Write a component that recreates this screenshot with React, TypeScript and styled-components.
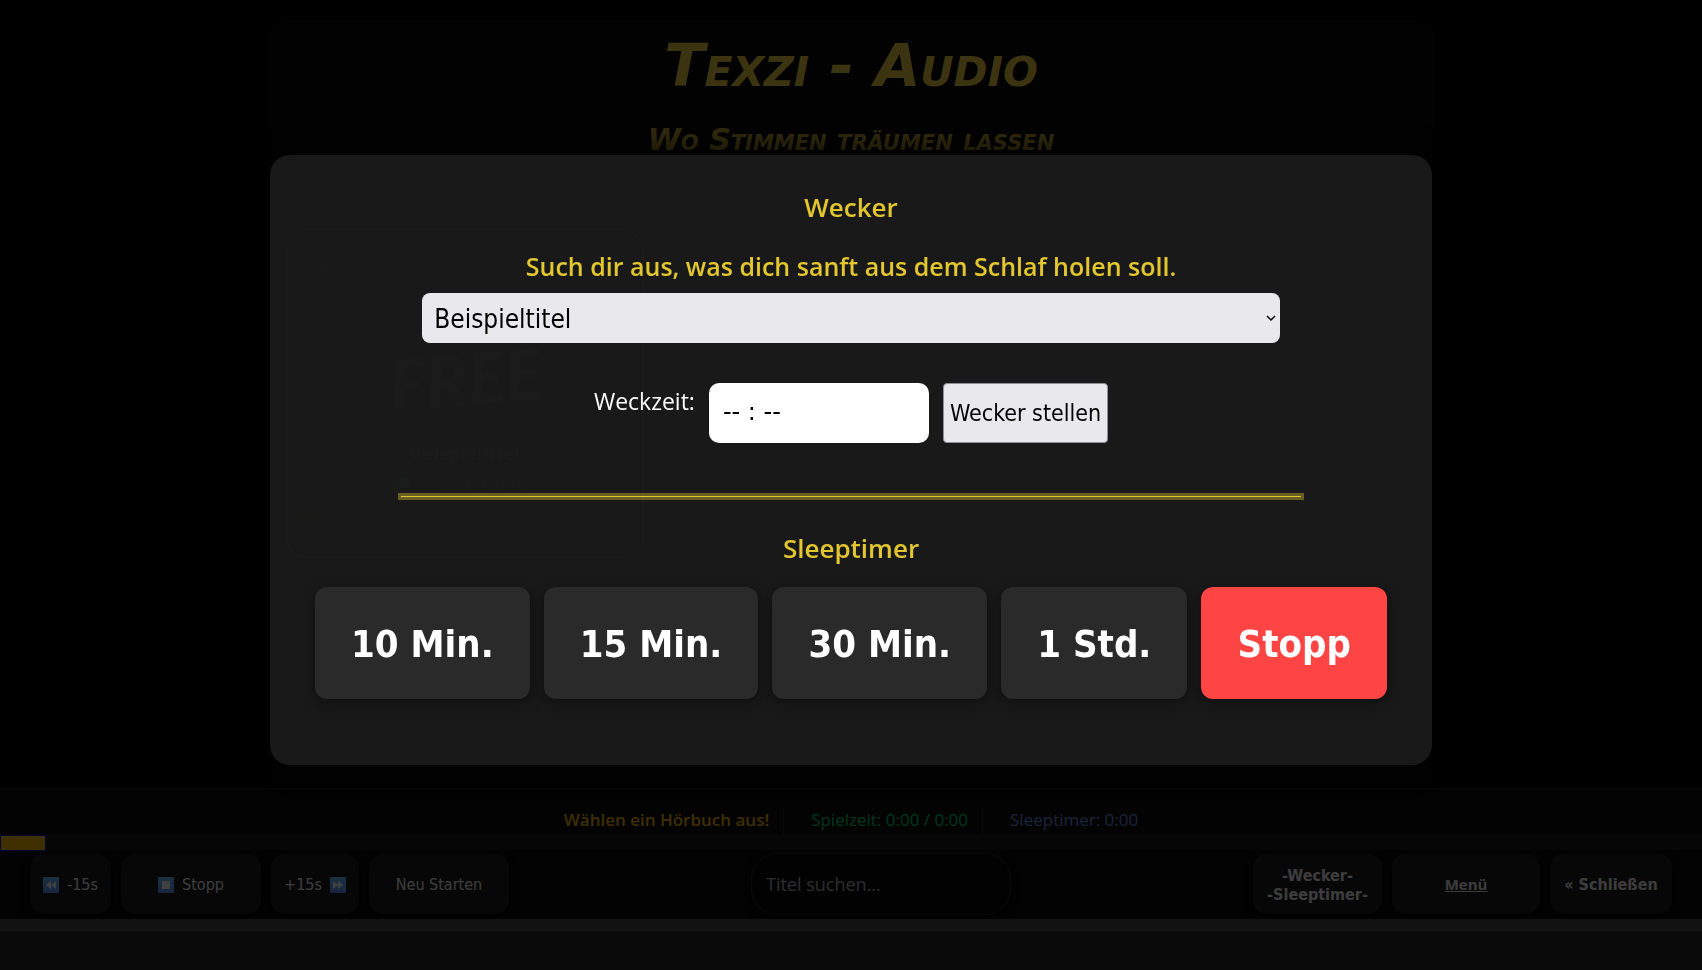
import React from 'react';
import styled, { createGlobalStyle } from 'styled-components';

const UI = "'DejaVu Sans Condensed', 'DejaVu Sans', sans-serif";
const TEXT = "'Open Sans', 'Noto Sans', sans-serif";
const GOLD = '#e3c72f';

const GlobalStyle = createGlobalStyle`
  * { box-sizing: border-box; }
  body { margin: 0; background: #000; color: #fff; font-family: ${TEXT}; }
  h1, h2, h3, p { margin: 0; }
  button, input, select { font-family: ${UI}; margin: 0; }
`;

/* ---------- page ---------- */
const Page = styled.div`
  display: flex;
  flex-direction: column;
  min-height: 100vh;
  overflow: hidden;
`;

const Main = styled.main`
  flex: 1;
  display: flex;
  justify-content: center;
  padding: 20px 20px 0;
`;

const Container = styled.div`
  width: 100%;
  max-width: 1168px;
  padding: 12px 19px 0;
  border-radius: 16px 16px 0 0;
  background: #080808;
`;

const SiteHeader = styled.header`
  font-family: 'DejaVu Sans', sans-serif;
  font-variant: small-caps;
  font-style: italic;
  text-align: center;
  color: #f0d040;
`;

const Title = styled.h1`
  font-size: 59px;
  font-weight: 700;
  line-height: 68px;
`;

const Subtitle = styled.p`
  margin-top: 24px;
  font-size: 30px;
  font-weight: 700;
  line-height: 32px;
  color: #d0b038;
`;

const BookCard = styled.article`
  display: flex;
  flex-direction: column;
  align-items: center;
  width: 358px;
  height: 330px;
  margin-top: 73px;
  padding: 12px 4px 0;
  border: 2px solid #e0c840;
  border-radius: 22px;
  background: #000;
`;

const Cover = styled.div`
  display: grid;
  grid-template-columns: 56px 1fr 56px;
  flex-shrink: 0;
  width: 100%;
  height: 198px;
`;

const Badge = styled.svg`
  justify-self: center;
`;

const CoverArt = styled.div`
  display: flex;
  align-items: flex-end;
  justify-content: center;
  background: linear-gradient(#30200c, #000 70%);
`;

const CoverWord = styled.span`
  font: italic 700 70px / 126px Lato, sans-serif;
  transform: rotate(-5deg);
`;

const BookTitle = styled.h3`
  font: 700 18px / 26px ${UI};
`;

const BookMeta = styled.p`
  display: flex;
  align-items: center;
  gap: 8px;
  margin-top: 6px;
  font: 400 14px / 24px ${UI};
  color: #b0b0b0;
`;

const BookProgress = styled.div`
  align-self: flex-start;
  width: 26px;
  height: 6px;
  margin: 14px 0 16px;
  background: #a08010;
`;

const BookHeard = styled.p`
  font: 400 14px / 20px 'DejaVu Sans Mono', monospace;
  color: #b0b0b0;
`;

/* ---------- player ---------- */
const Player = styled.footer`
  border-top: 1px solid #282828;
  background: #0c0c0c;
`;

const StatusLine = styled.div`
  display: flex;
  justify-content: center;
  height: 46px;
  padding-top: 18px;
  font-size: 17px;
  line-height: 26px;
`;

const Status = styled.span<{ $color: string; $strong?: boolean }>`
  color: ${(p) => p.$color};
  font-weight: ${(p) => (p.$strong ? 600 : 400)};

  & + & {
    margin-left: 14px;
    padding-left: 27px;
    border-left: 1px solid #202020;
  }
`;

const Track = styled.div`
  height: 15px;
  background: #1a1a1a;
`;

const TrackFill = styled.div`
  width: 46px;
  height: 16px;
  border: 1px solid #1414d8;
  background: #ffc000;
`;

const Controls = styled.div`
  display: flex;
  justify-content: space-between;
  align-items: center;
  height: 69px;
  padding: 0 30px 2px;
`;

const Group = styled.div`
  display: flex;
  gap: 10px;
`;

const controlBox = `
  display: flex;
  align-items: center;
  justify-content: center;
  gap: 8px;
  height: 60px;
  padding: 2px 0 0;
  border: 0;
  border-radius: 14px;
  background: #1c1c1c;
  box-shadow: 0 4px 10px #000;
  color: #f0f0f0;
  font-size: 16px;
  line-height: 19px;
`;

const Control = styled.button<{ $width: number; $strong?: boolean }>`
  ${controlBox}
  width: ${(p) => p.$width}px;
  font-weight: ${(p) => (p.$strong ? 700 : 400)};
`;

const MenuLink = styled.a`
  ${controlBox}
  width: 148px;
  font-family: ${TEXT};
  font-size: 15px;
  font-weight: 700;
`;

const Search = styled.input`
  width: 260px;
  height: 62px;
  padding: 0 14px;
  border: 1px solid #262626;
  border-radius: 26px;
  background: #0a0a0a;
  box-shadow: 0 4px 10px #000;
  color: #fff;
  font-family: ${TEXT};
  font-size: 18px;

  &::placeholder { color: #b0b0b0; opacity: 1; }
`;

const Strip = styled.div`
  height: 12px;
  background: #484848;
`;

const BottomArea = styled.div`
  height: 39px;
  background: #282828;
`;

/* ---------- dialog ---------- */
const Overlay = styled.div`
  position: fixed;
  inset: 0;
  display: flex;
  align-items: flex-start;
  justify-content: center;
  padding: 155px 20px 20px;
  overflow: auto;
  background: rgba(0, 0, 0, 0.75);
`;

const Dialog = styled.section`
  display: flex;
  flex-direction: column;
  align-items: center;
  width: 100%;
  max-width: 1162px;
  padding: 34px 45px 66px;
  border-radius: 20px;
  background: rgba(26, 26, 26, 0.96);
  box-shadow: 0 0 40px #000;
`;

const Heading = styled.h2`
  color: ${GOLD};
  font-size: 26px;
  font-weight: 600;
  line-height: 36px;
`;

const Prompt = styled.label`
  margin: 23px 0 9px;
  color: ${GOLD};
  font-size: 25px;
  font-weight: 600;
  line-height: 36px;
`;

const SelectWrap = styled.div`
  position: relative;
  width: 80%;
`;

const Select = styled.select`
  appearance: none;
  display: block;
  width: 100%;
  height: 50px;
  padding: 2px 12px 0;
  border: 0;
  border-radius: 8px;
  background: #e9e9ed;
  color: #000;
  font-size: 26px;
`;

const Chevron = styled.svg`
  position: absolute;
  top: 22px;
  right: 4px;
  pointer-events: none;
`;

const AlarmForm = styled.form`
  display: flex;
  align-items: flex-start;
  gap: 14px;
  margin: 40px 0 50px;
`;

const TimeLabel = styled.label`
  font-size: 23px;
  line-height: 36px;
`;

const TimeInput = styled.input`
  width: 220px;
  height: 60px;
  padding: 0 14px 2px;
  border: 0;
  border-radius: 10px;
  background: #fff;
  color: #000;
  font-family: 'DejaVu Sans', sans-serif;
  font-size: 24px;

  &::placeholder { color: #000; opacity: 1; }
`;

const SetButton = styled.button`
  height: 60px;
  padding: 0 6px;
  border: 1px solid #8f8f9d;
  border-radius: 4px;
  background: #e9e9ed;
  color: #000;
  font-size: 23px;
`;

const Divider = styled.hr`
  width: 906px;
  max-width: 100%;
  height: 7px;
  margin: 0 0 30px;
  border: 3px solid rgba(227, 199, 47, 0.4);
  background: ${GOLD};
  background-clip: content-box;
`;

const TimerRow = styled.div`
  display: flex;
  gap: 14px;
  width: 100%;
  margin-top: 21px;
`;

const TimerButton = styled.button<{ $stop?: boolean }>`
  flex: 1 1 auto;
  height: 112px;
  padding: 2px 36px 0;
  border: 0;
  border-radius: 12px;
  background: ${(p) => (p.$stop ? '#ff4444' : '#2a2a2a')};
  box-shadow: 0 4px 15px rgba(0, 0, 0, 0.4);
  color: #fff;
  font-size: 38px;
  font-weight: 700;
`;

const glyphs = {
  rewind: 'M8 4v8L3 8zM13 4v8L8 8z',
  forward: 'M3 4v8l5-4zM8 4v8l5-4z',
  stop: 'M4 4h8v8H4z',
  play: 'M5 4v8l7-4z',
};

function MediaIcon({ kind }: { kind: keyof typeof glyphs }) {
  return (
    <svg width="16" height="16" viewBox="0 0 16 16" aria-hidden="true">
      <defs>
        <linearGradient id={`tile-${kind}`} x1="0" y1="0" x2="0" y2="1">
          <stop offset="0" stopColor="#68c0ff" />
          <stop offset="0.35" stopColor="#68b4ff" />
          <stop offset="1" stopColor="#6090f8" />
        </linearGradient>
      </defs>
      <rect width="16" height="16" rx="1" fill={`url(#tile-${kind})`} />
      <path d={glyphs[kind]} fill="#fff" />
    </svg>
  );
}

const timers = ['10 Min.', '15 Min.', '30 Min.', '1 Std.'];

export default function App() {
  return (
    <>
      <GlobalStyle />
      <Page>
        <Main>
          <Container>
            <SiteHeader>
              <Title>Texzi - Audio</Title>
              <Subtitle>Wo Stimmen träumen lassen</Subtitle>
            </SiteHeader>
            <BookCard>
              <Cover>
                <Badge width="34" height="34" viewBox="0 0 34 34" aria-hidden="true">
                  <circle cx="17" cy="17" r="16" fill="#101010" stroke="#808080" strokeWidth="2" />
                  <path d="M9 9l7-3 6 4-3 5 5 4 1 7-5 3-5-2 2-6-4-4-4-2z" fill="#707070" />
                </Badge>
                <CoverArt>
                  <CoverWord>FREE</CoverWord>
                </CoverArt>
              </Cover>
              <BookTitle>Beispieltitel</BookTitle>
              <BookMeta>
                <MediaIcon kind="play" />
                Spielzeit: 4:51 Min.
              </BookMeta>
              <BookProgress />
              <BookHeard>0:27 Min. gehört von 4:51 Min.</BookHeard>
            </BookCard>
          </Container>
        </Main>
        <Player>
          <StatusLine>
            <Status $color="#f5b400" $strong>Wählen ein Hörbuch aus!</Status>
            <Status $color="#00d870">Spielzeit: 0:00 / 0:00</Status>
            <Status $color="#6090e0">Sleeptimer: 0:00</Status>
          </StatusLine>
          <Track>
            <TrackFill />
          </Track>
          <Controls>
            <Group>
              <Control $width={81}><MediaIcon kind="rewind" />-15s</Control>
              <Control $width={140}><MediaIcon kind="stop" />Stopp</Control>
              <Control $width={88}>+15s<MediaIcon kind="forward" /></Control>
              <Control $width={140}>Neu Starten</Control>
            </Group>
            <Search type="search" placeholder="Titel suchen..." aria-label="Titel suchen" />
            <Group>
              <Control $width={129} $strong>-Wecker-<br />-Sleeptimer-</Control>
              <MenuLink href="#menu">Menü</MenuLink>
              <Control $width={122} $strong>« Schließen</Control>
            </Group>
          </Controls>
        </Player>
        <Strip />
        <BottomArea />
      </Page>
      <Overlay>
        <Dialog role="dialog" aria-labelledby="alarm-heading">
          <Heading id="alarm-heading">Wecker</Heading>
          <Prompt htmlFor="alarm-sound">Such dir aus, was dich sanft aus dem Schlaf holen soll.</Prompt>
          <SelectWrap>
            <Select id="alarm-sound">
              <option>Beispieltitel</option>
            </Select>
            <Chevron width="10" height="7" viewBox="0 0 10 7" aria-hidden="true">
              <path d="M1 1l4 4 4-4" fill="none" stroke="#000" strokeWidth="1.5" />
            </Chevron>
          </SelectWrap>
          <AlarmForm>
            <TimeLabel htmlFor="alarm-time">Weckzeit:</TimeLabel>
            <TimeInput id="alarm-time" type="text" inputMode="numeric" placeholder="-- : --" />
            <SetButton type="button">Wecker stellen</SetButton>
          </AlarmForm>
          <Divider />
          <Heading>Sleeptimer</Heading>
          <TimerRow>
            {timers.map((t) => (
              <TimerButton key={t}>{t}</TimerButton>
            ))}
            <TimerButton $stop>Stopp</TimerButton>
          </TimerRow>
        </Dialog>
      </Overlay>
    </>
  );
}
